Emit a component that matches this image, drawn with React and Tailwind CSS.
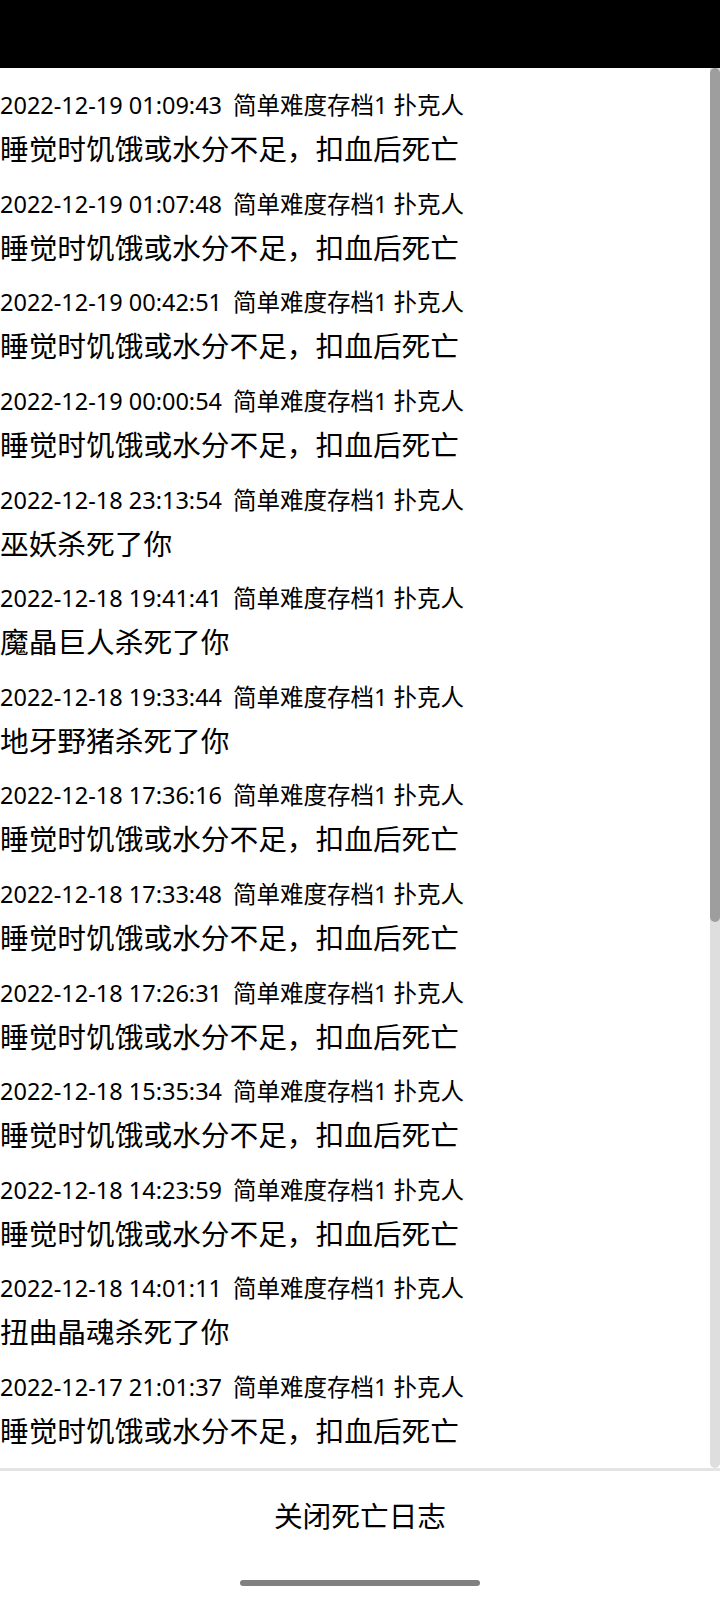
import React from 'react';

const SAVE = '简单难度存档1 扑克人';
const SLEEP = '睡觉时饥饿或水分不足，扣血后死亡';

const logs = [
  { time: '2022-12-19 01:09:43', reason: SLEEP },
  { time: '2022-12-19 01:07:48', reason: SLEEP },
  { time: '2022-12-19 00:42:51', reason: SLEEP },
  { time: '2022-12-19 00:00:54', reason: SLEEP },
  { time: '2022-12-18 23:13:54', reason: '巫妖杀死了你' },
  { time: '2022-12-18 19:41:41', reason: '魔晶巨人杀死了你' },
  { time: '2022-12-18 19:33:44', reason: '地牙野猪杀死了你' },
  { time: '2022-12-18 17:36:16', reason: SLEEP },
  { time: '2022-12-18 17:33:48', reason: SLEEP },
  { time: '2022-12-18 17:26:31', reason: SLEEP },
  { time: '2022-12-18 15:35:34', reason: SLEEP },
  { time: '2022-12-18 14:23:59', reason: SLEEP },
  { time: '2022-12-18 14:01:11', reason: '扭曲晶魂杀死了你' },
  { time: '2022-12-17 21:01:37', reason: SLEEP },
];

function LogEntry({ entry }) {
  return (
    <div className="py-[9.3px] text-black">
      <div className="whitespace-nowrap text-[23.5px] leading-[34px] font-['Noto_Sans','Noto_Sans_CJK_SC',sans-serif]">
        <span>{entry.time}</span>
        <span className="ml-[11px]">{SAVE}</span>
      </div>
      <div className="mt-[6px] whitespace-nowrap text-[28.7px] leading-[40px] font-['Noto_Sans_CJK_SC',sans-serif]">
        {entry.reason}
      </div>
    </div>
  );
}

export default function App() {
  return (
    <div className="w-[720px] h-[1600px] bg-white flex flex-col overflow-hidden">
      {/* status bar */}
      <div className="h-[68px] bg-black shrink-0" />

      {/* death log list */}
      <div className="flex h-[1403px] shrink-0 border-b-[3px] border-[#e4e4e4]">
        <div className="flex-1 overflow-hidden pt-[11px]">
          {logs.map((entry, i) => (
            <LogEntry key={i} entry={entry} />
          ))}
        </div>
        <div className="w-[10px] flex flex-col bg-[#dedede] rounded-b-full">
          <div className="h-[854px] bg-[#9e9e9e] rounded-full" />
        </div>
      </div>

      {/* close button */}
      <div className="flex-1 flex flex-col items-center">
        <button className="mt-[24px] text-[28.7px] leading-[40px] text-black font-['Noto_Sans_CJK_SC',sans-serif]">
          关闭死亡日志
        </button>
        <div className="mt-[45px] w-[240px] h-[6px] rounded-full bg-[#808080]" />
      </div>
    </div>
  );
}
